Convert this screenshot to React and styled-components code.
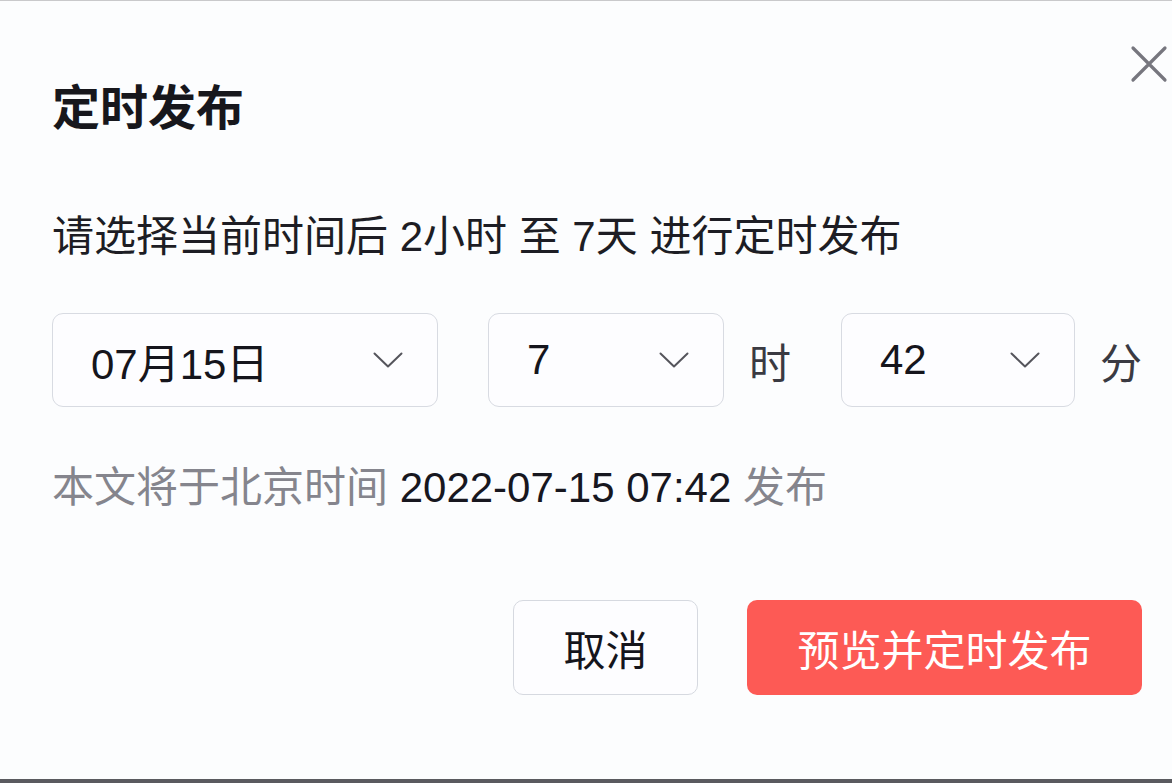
import React from 'react';
import styled, { createGlobalStyle } from 'styled-components';

const GlobalStyle = createGlobalStyle`
  html, body {
    margin: 0;
    padding: 0;
    background: #fcfdfe;
  }
  * {
    box-sizing: border-box;
  }
`;

const FONT = `"Liberation Sans", "Noto Sans CJK SC", sans-serif`;

const Dialog = styled.div`
  position: relative;
  width: 1172px;
  height: 783px;
  display: flex;
  flex-direction: column;
  padding: 0 30px 0 52px;
  background: #fcfdfe;
  border-top: 1px solid #c9c9cb;
  border-bottom: 4px solid #5a5a5f;
  font-family: ${FONT};
  color: #16161e;
`;

const CloseButton = styled.button`
  position: absolute;
  top: 44px;
  right: 4px;
  width: 38px;
  height: 38px;
  padding: 0;
  border: none;
  background: transparent;
  cursor: pointer;
`;

const Title = styled.h2`
  margin: 83px 0 0;
  font-size: 48px;
  line-height: 50px;
  font-weight: 700;
  color: #17171c;
`;

const Hint = styled.p`
  margin: 81px 0 0;
  font-size: 42px;
  line-height: 44px;
  color: #1d1d24;
`;

const PickerRow = styled.div`
  display: flex;
  align-items: center;
  gap: 50px;
  margin-top: 54px;
`;

const PickerGroup = styled.div`
  display: flex;
  align-items: center;
  gap: 25px;
`;

const Select = styled.div`
  width: ${(p) => p.width}px;
  height: 94px;
  display: flex;
  align-items: center;
  justify-content: space-between;
  padding: 0 34px 0 38px;
  border: 1.5px solid #d8dbe2;
  border-radius: 11px;
  background: #fdfdff;
  font-size: 42px;
  color: #15151c;
`;

const Unit = styled.span`
  font-size: 42px;
  color: #3a3a42;
`;

const Info = styled.p`
  margin: 59px 0 0;
  font-size: 42px;
  line-height: 44px;
  color: #85858d;
`;

const Stamp = styled.span`
  color: #17171f;
`;

const Footer = styled.div`
  display: flex;
  justify-content: flex-end;
  gap: 49px;
  margin-top: 90px;
`;

const Button = styled.button`
  height: 95px;
  padding: 0;
  width: ${(p) => p.width}px;
  border-radius: 10px;
  font-family: ${FONT};
  font-size: 42px;
  cursor: pointer;
  border: ${(p) => (p.primary ? 'none' : '1.5px solid #d6d9e0')};
  background: ${(p) => (p.primary ? '#fd5a55' : '#fdfdff')};
  color: ${(p) => (p.primary ? '#ffffff' : '#15151c')};
`;

function Chevron() {
  return (
    <svg width="30" height="16" viewBox="0 0 30 16" fill="none">
      <path d="M1.5 1.5 L15 14.5 L28.5 1.5" stroke="#55555c" strokeWidth="2" strokeLinecap="round" strokeLinejoin="round" />
    </svg>
  );
}

function CloseIcon() {
  return (
    <svg width="38" height="38" viewBox="0 0 38 38" fill="none">
      <path d="M3 3 L35 35 M35 3 L3 35" stroke="#76767e" strokeWidth="3.2" strokeLinecap="round" />
    </svg>
  );
}

export default function App() {
  return (
    <>
      <GlobalStyle />
      <Dialog>
        <CloseButton aria-label="关闭">
          <CloseIcon />
        </CloseButton>
        <Title>定时发布</Title>
        <Hint>请选择当前时间后 2小时 至 7天 进行定时发布</Hint>
        <PickerRow>
          <Select width={389}>
            <span>07月15日</span>
            <Chevron />
          </Select>
          <PickerGroup>
            <Select width={236}>
              <span>7</span>
              <Chevron />
            </Select>
            <Unit>时</Unit>
          </PickerGroup>
          <PickerGroup>
            <Select width={234}>
              <span>42</span>
              <Chevron />
            </Select>
            <Unit>分</Unit>
          </PickerGroup>
        </PickerRow>
        <Info>
          本文将于北京时间 <Stamp>2022-07-15 07:42</Stamp> 发布
        </Info>
        <Footer>
          <Button width={185}>取消</Button>
          <Button primary width={395}>预览并定时发布</Button>
        </Footer>
      </Dialog>
    </>
  );
}
